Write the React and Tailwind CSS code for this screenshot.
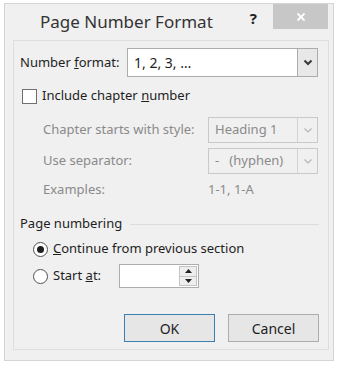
import React from 'react'

const Chevron = ({ color = '#444', w = 2 }) => (
  <svg width="10" height="7" viewBox="0 0 10 7">
    <path d="M1.5 1.5 L5 5 L8.5 1.5" fill="none" stroke={color} strokeWidth={w} />
  </svg>
)

const Select = ({ value, disabled, className }) => (
  <div className={`flex border ${disabled ? 'border-[#c9c9c9] bg-[#f0f0f0] text-[#8a8a8a]' : 'border-[#acacac] bg-white text-[#1e1e1e]'} ${className}`}>
    <div className='flex-1 flex items-center pl-[6px] whitespace-pre'>{value}</div>
    <div className={`w-[20px] flex items-center justify-center border-l ${disabled ? 'border-[#d3d3d3]' : 'border-[#acacac] bg-[#e8e8e8]'}`}>
      <Chevron color={disabled ? '#b5b5b5' : '#3c3c3c'} w={disabled ? 1.2 : 2.2} />
    </div>
  </div>
)

const App = () => {
  return (
    <div className='w-[341px] h-[365px] bg-white pt-[3px] pl-[4px]' style={{ fontFamily: '"Noto Sans", "Open Sans", sans-serif' }}>
      <div className='w-[330px] h-[358px] border border-[#d4d4d4] bg-[#f0f0f0] flex flex-col'>
        {/* title bar */}
        <div className='h-[36px] flex items-start'>
          <div className='text-[17px] text-[#333] pl-[35px] pt-[8px] leading-[20px]'>Page Number Format</div>
          <div className='ml-auto text-[15px] font-bold text-[#222] pt-[6px] mr-[16px] leading-[16px]'>?</div>
          <div className='w-[55px] h-[25px] bg-[#c7c7c7] flex items-center justify-center mr-[5px]'>
            <svg width="10" height="10" viewBox="0 0 10 10">
              <path d="M1.5 1.5 L8.5 8.5 M8.5 1.5 L1.5 8.5" stroke="#fff" strokeWidth="1.8" />
            </svg>
          </div>
        </div>

        {/* content panel */}
        <div className='ml-[8px] w-[316px] h-[310px] border border-[#dedede] bg-[#f0f0f0] pl-[6px] pr-[9px] text-[13px] text-[#1e1e1e] flex flex-col'>
          <div className='mt-[7px] h-[29px] flex items-center'>
            <span className='w-[107px]'>Number <u>f</u>ormat:</span>
            <Select value="1, 2, 3, …" className='w-[191px] h-[29px] text-[14px]' />
          </div>

          <div className='mt-[11px] h-[16px] flex items-center'>
            <div className='ml-[2px] w-[15px] h-[15px] border border-[#707070] bg-white'></div>
            <span className='ml-[5px]'>Include chapter <u>n</u>umber</span>
          </div>

          <div className='mt-[13px] h-[26px] flex items-center text-[#8a8a8a]'>
            <span className='pl-[23px] w-[188px]'>Chapter starts with style:</span>
            <Select value="Heading 1" disabled className='w-[110px] h-[26px]' />
          </div>
          <div className='mt-[5px] h-[26px] flex items-center text-[#8a8a8a]'>
            <span className='pl-[23px] w-[188px]'>Use separator:</span>
            <Select value="-   (hyphen)" disabled className='w-[110px] h-[26px]' />
          </div>
          <div className='mt-[8px] h-[16px] flex items-center text-[#8a8a8a]'>
            <span className='pl-[23px] w-[188px]'>Examples:</span>
            <span>1-1, 1-A</span>
          </div>

          <div className='mt-[18px] h-[16px] flex items-center'>
            <span>Page numbering</span>
            <div className='flex-1 ml-[8px] h-px bg-[#dcdcdc]'></div>
          </div>

          <div className='mt-[9px] h-[16px] flex items-center'>
            <div className='ml-[13px] w-[15px] h-[15px] rounded-full border border-[#505050] bg-white flex items-center justify-center'>
              <div className='w-[7px] h-[7px] rounded-full bg-[#1e1e1e]'></div>
            </div>
            <span className='ml-[5px]'><u>C</u>ontinue from previous section</span>
          </div>

          <div className='mt-[7px] h-[24px] flex items-center'>
            <div className='ml-[13px] w-[15px] h-[15px] rounded-full border border-[#505050] bg-white'></div>
            <span className='ml-[5px] w-[66px]'>Start <u>a</u>t:</span>
            <div className='w-[80px] h-[24px] border border-[#acacac] bg-white flex justify-end'>
              <div className='w-[18px] my-[1px] mr-[1px] border border-[#c4c4c4] bg-[#eeeeee] flex flex-col'>
                <div className='flex-1 flex items-center justify-center border-b border-[#c4c4c4]'>
                  <svg width="7" height="4" viewBox="0 0 7 4"><path d="M0 4 L3.5 0 L7 4 Z" fill="#222" /></svg>
                </div>
                <div className='flex-1 flex items-center justify-center'>
                  <svg width="7" height="4" viewBox="0 0 7 4"><path d="M0 0 L3.5 4 L7 0 Z" fill="#222" /></svg>
                </div>
              </div>
            </div>
          </div>

          <div className='mt-[26px] h-[28px] flex justify-end gap-[13px]'>
            <button className='w-[91px] h-[28px] border border-[#3c7fb1] bg-[#e6e6e6] text-[14px] text-[#1e1e1e]'>OK</button>
            <button className='w-[91px] h-[28px] border border-[#acacac] bg-[#e6e6e6] text-[14px] text-[#1e1e1e]'>Cancel</button>
          </div>
        </div>
      </div>
    </div>
  )
}

export default App
